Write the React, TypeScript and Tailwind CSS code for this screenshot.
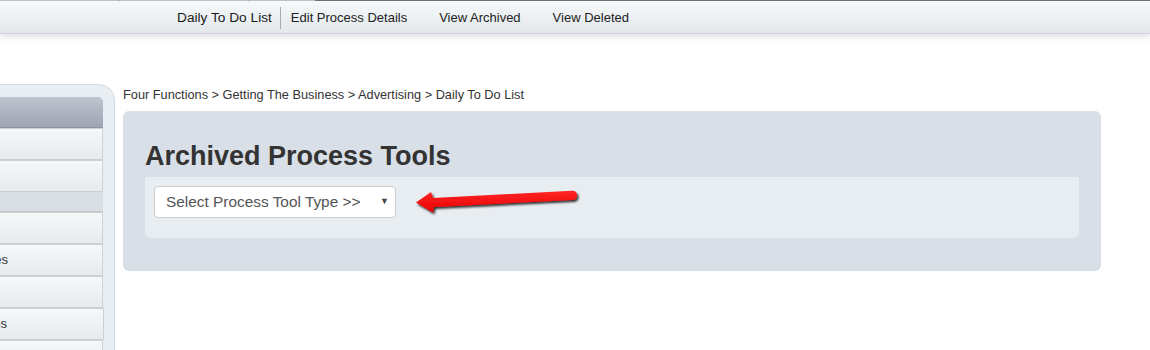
import React from 'react';

const NAV = ['Edit Process Details', 'View Archived', 'View Deleted'];

// the sidebar is scrolled partly off the left edge; only two labels peek out
const SIDE_ITEMS = [
  { label: '', section: false },
  { label: '', section: false },
  { label: '', section: true },
  { label: '', section: false },
  { label: 'Process Templates', section: false },
  { label: '', section: false },
  { label: 'Process Resources', section: false, active: true },
  { label: '', section: false },
];

function RedArrow() {
  return (
    <svg width="172" height="32" viewBox="0 0 172 32" className="block">
      <defs>
        <filter id="sh" x="-10%" y="-50%" width="120%" height="200%">
          <feDropShadow dx="1.5" dy="2" stdDeviation="1.3" floodColor="#000" floodOpacity="0.8" />
        </filter>
        <linearGradient id="rg" x1="0" y1="0" x2="0" y2="1">
          <stop offset="0" stopColor="#ff2626" />
          <stop offset="1" stopColor="#e60000" />
        </linearGradient>
      </defs>
      <path
        d="M2 14.5 L17 4 L19 10 L158 2.8 Q163 2.6 163 7.3 Q163 12 158 12 L20 19 L19 24.5 Z"
        fill="url(#rg)"
        filter="url(#sh)"
      />
    </svg>
  );
}

export default function App() {
  return (
    <div className="w-[1150px] h-[350px] overflow-hidden bg-white text-[#333] font-['Liberation_Sans',Arial,sans-serif]">
      {/* top nav */}
      <div className="flex h-px">
        <div className="w-[119px] bg-[#bac2ca]" />
        <div className="w-px bg-[#9aa2aa]" />
        <div className="w-[128px] bg-[#bac2ca]" />
        <div className="w-px bg-[#9aa2aa]" />
        <div className="w-[66px] bg-[#bac2ca]" />
        <div className="flex-1 bg-[#6b7176]" />
      </div>
      <div className="h-[33px] flex items-center pt-[2px] bg-gradient-to-b from-[#f5f9f9] to-[#e4e8ed] border-b border-[#cfd3dc] shadow-[0_3px_7px_rgba(0,0,0,0.12)] text-[13px] text-[#222]">
        <div className="flex items-center ml-[177px]">
          <span className="pr-[8px] text-[13.7px] text-[#1a1a1a]">Daily To Do List</span>
          <span className="w-px h-[22px] bg-[#a8acb0]" />
          <span className="pl-[10px]">{NAV[0]}</span>
          <span className="pl-[32px]">{NAV[1]}</span>
          <span className="pl-[32px]">{NAV[2]}</span>
        </div>
      </div>

      <div className="flex mt-[50px]">
        <div className="w-[260px] ml-[-145px] shrink-0 h-[280px] bg-[#e9eef2] border border-[#d6dbe1] rounded-tr-[16px] pt-[12px] pr-[11px]">
          <div className="h-[31px] bg-gradient-to-b from-[#c0c4d0] to-[#9ea4b4] rounded-tr-[5px] border-b border-[#8e94a2]" />
          {SIDE_ITEMS.map((it, i) =>
            it.section ? (
              <div key={i} className="h-[20px] bg-[#d9dee5] border-b border-[#c4c8ce]" />
            ) : (
              <div
                key={i}
                className={
                  'h-[32px] flex items-center justify-end text-[13px] text-[#333] bg-gradient-to-b from-[#f4f8f9] to-[#e7ebee] border border-[#cbd0d5] ' +
                  (it.active ? 'mr-[-1px]' : '')
                }
              >
                <span className={it.active ? 'mr-[96px]' : 'mr-[94px]'}>{it.label}</span>
              </div>
            )
          )}
        </div>

        {/* main */}
        <div className="ml-[8px] w-[978px]">
          <div className="text-[12.75px] text-[#333] leading-[20px] pt-[1px]">
            Four Functions &gt; Getting The Business &gt; Advertising &gt; Daily To Do List
          </div>
          <div className="mt-[6px] bg-[#d8dfe6] rounded-[6px] px-[22px] pt-[24px] pb-[33px]">
            <h1 className="text-[27px] font-bold leading-[42px] text-[#333]">Archived Process Tools</h1>
            <div className="bg-[#e8edf1] rounded-b-[5px] h-[61px] px-[9px] pt-[9px] flex items-start">
              <div className="w-[242px] h-[32px] bg-white border border-[#ccc] rounded-[4px] flex items-center justify-between pl-[11px] pr-[6px] text-[15.4px] text-[#555]">
                <span>Select Process Tool Type &gt;&gt;</span>
                <span className="text-[9px] text-[#444]">▼</span>
              </div>
              <div className="ml-[18px] mt-[2px]">
                <RedArrow />
              </div>
            </div>
          </div>
        </div>
      </div>
    </div>
  );
}
